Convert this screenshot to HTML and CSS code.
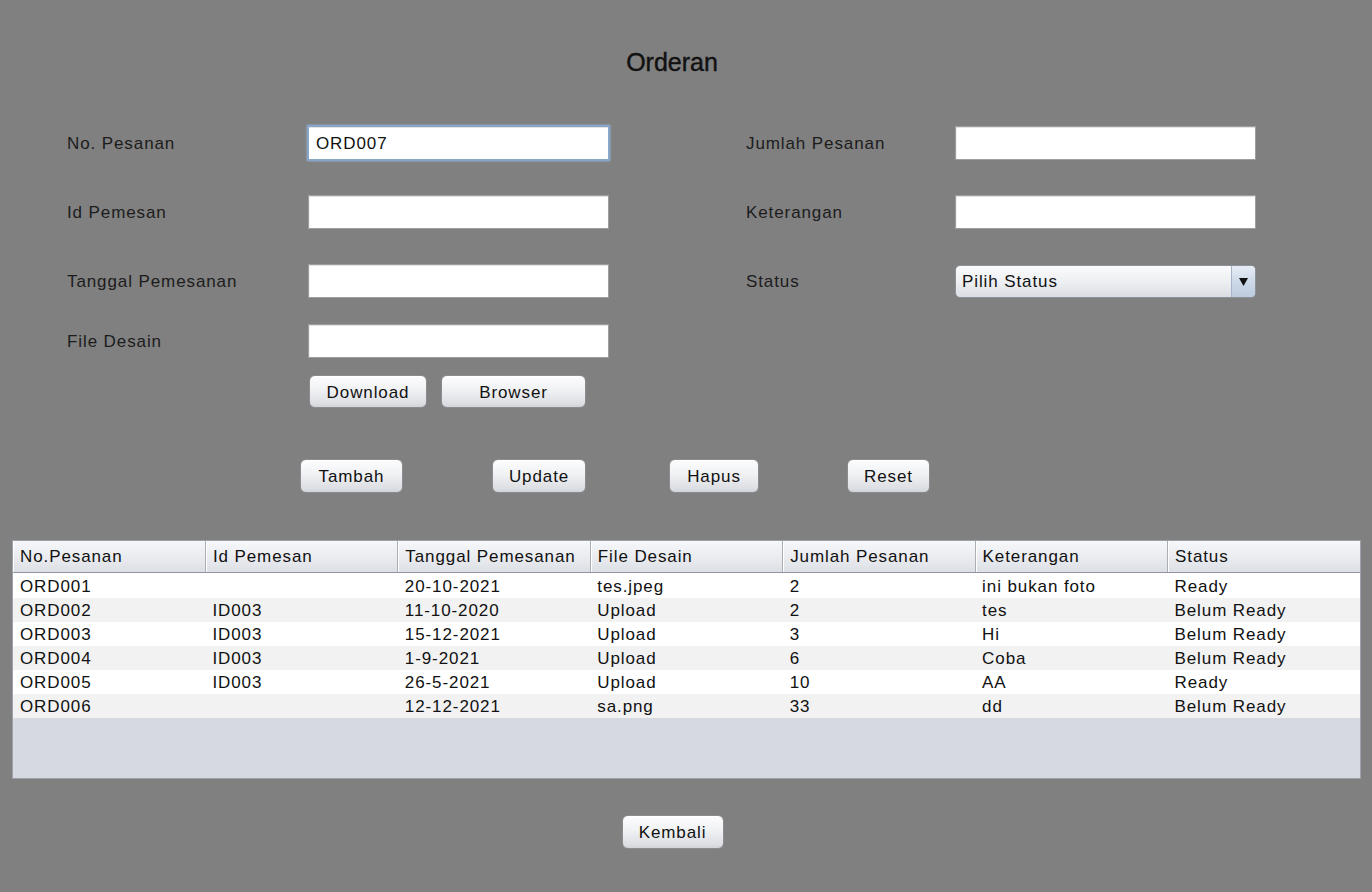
FILE: index.html
```html
<!DOCTYPE html>
<html lang="id">
<head>
<meta charset="utf-8">
<title>Orderan</title>
<link rel="stylesheet" href="styles.css">
</head>
<body>
<div class="frame">
  <h1 class="title">Orderan</h1>

  <div class="form">
    <label class="lbl">No. Pesanan</label>
    <div class="field focused">ORD007</div>
    <div class="spacer"></div>
    <label class="lbl">Jumlah Pesanan</label>
    <div class="field"></div>

    <label class="lbl">Id Pemesan</label>
    <div class="field"></div>
    <div class="spacer"></div>
    <label class="lbl">Keterangan</label>
    <div class="field"></div>

    <label class="lbl">Tanggal Pemesanan</label>
    <div class="field"></div>
    <div class="spacer"></div>
    <label class="lbl">Status</label>
    <div class="combo">
      <span class="combo-text">Pilih Status</span>
      <span class="combo-btn"><svg width="9" height="8" viewBox="0 0 9 8"><path d="M0 0H9L4.5 8Z" fill="#111"/></svg></span>
    </div>

    <label class="lbl">File Desain</label>
    <div class="field"></div>
  </div>

  <div class="file-buttons">
    <button class="btn w-download">Download</button>
    <button class="btn w-browser">Browser</button>
  </div>

  <div class="actions">
    <button class="btn w-tambah">Tambah</button>
    <button class="btn w-update">Update</button>
    <button class="btn w-hapus">Hapus</button>
    <button class="btn w-reset">Reset</button>
  </div>

  <div class="table-wrap">
    <table class="grid">
      <thead>
        <tr>
          <th>No.Pesanan</th><th>Id Pemesan</th><th>Tanggal Pemesanan</th><th>File Desain</th><th>Jumlah Pesanan</th><th>Keterangan</th><th>Status</th>
        </tr>
      </thead>
      <tbody>
        <tr><td>ORD001</td><td></td><td>20-10-2021</td><td>tes.jpeg</td><td>2</td><td>ini bukan foto</td><td>Ready</td></tr>
        <tr><td>ORD002</td><td>ID003</td><td>11-10-2020</td><td>Upload</td><td>2</td><td>tes</td><td>Belum Ready</td></tr>
        <tr><td>ORD003</td><td>ID003</td><td>15-12-2021</td><td>Upload</td><td>3</td><td>Hi</td><td>Belum Ready</td></tr>
        <tr><td>ORD004</td><td>ID003</td><td>1-9-2021</td><td>Upload</td><td>6</td><td>Coba</td><td>Belum Ready</td></tr>
        <tr><td>ORD005</td><td>ID003</td><td>26-5-2021</td><td>Upload</td><td>10</td><td>AA</td><td>Ready</td></tr>
        <tr><td>ORD006</td><td></td><td>12-12-2021</td><td>sa.png</td><td>33</td><td>dd</td><td>Belum Ready</td></tr>
      </tbody>
    </table>
  </div>

  <div class="bottom">
    <button class="btn w-kembali">Kembali</button>
  </div>
</div>
</body>
</html>
```

FILE: styles.css
```css
html, body {
  margin: 0;
  padding: 0;
  background: #808080;
}

body {
  width: 1372px;
  height: 892px;
  overflow: hidden;
  font-family: "Liberation Sans", Arial, sans-serif;
  font-size: 17px;
  letter-spacing: 0.9px;
  color: #1c1c1c;
}

.frame {
  display: flex;
  flex-direction: column;
}

.title {
  margin: 48px 0 0 0;
  padding-right: 28px;
  height: 28px;
  line-height: 28px;
  text-align: center;
  font-family: "Liberation Sans", Arial, sans-serif;
  font-weight: normal;
  font-size: 25px;
  letter-spacing: 0;
  color: #111;
  -webkit-text-stroke: 0.4px #111;
}

.form {
  margin-top: 50px;
  padding-left: 67px;
  display: grid;
  grid-template-columns: 241px 301px 137px 209px 301px;
  grid-template-rows: 69px 69px 60px 34px;
  align-items: start;
}

.lbl {
  height: 34px;
  line-height: 36px;
  color: #1c1c1c;
}

.field {
  box-sizing: border-box;
  height: 34px;
  background: #fff;
  border: 1px solid #9e9e9e;
  box-shadow: inset 0 1px 0 #e2e2e2, inset 1px 0 0 #f0f0f0;
  padding-left: 7px;
  line-height: 33px;
  color: #111;
}

.field.focused {
  border: 1px solid #8aa6c9;
  box-shadow: 0 0 0 1px #86a5cc, 0 0 2px 1px #9fb6d4, inset 0 1px 0 #e2e2e2;
}

.combo {
  box-sizing: border-box;
  height: 33px;
  margin-top: 1px;
  display: flex;
  border: 1px solid #8d9299;
  border-radius: 5px;
  background: linear-gradient(#fbfbfc, #eceef1 55%, #dadde2);
  overflow: hidden;
}

.combo-text {
  flex: 1;
  padding-left: 6px;
  line-height: 32px;
  color: #111;
}

.combo-btn {
  width: 23px;
  border-left: 1px solid #a5b4c8;
  background: linear-gradient(#e6edf6, #ccd8e7 55%, #bccbdd);
  display: flex;
  align-items: center;
  justify-content: center;
}

.btn {
  box-sizing: border-box;
  height: 34px;
  padding: 2px 0 0 0;
  font-family: "Liberation Sans", Arial, sans-serif;
  font-size: 17px;
  letter-spacing: 0.9px;
  color: #111;
  border: 1px solid #8a8c90;
  border-radius: 6px;
  background: linear-gradient(#fdfdfe, #f0f1f3 45%, #dcdee3 90%, #d0d3d8);
  box-shadow: inset 0 1px 0 #ffffff;
}

.file-buttons {
  margin-top: 17px;
  padding-left: 309px;
  display: flex;
  gap: 14px;
}

.file-buttons .btn { height: 33px; }

.w-download { width: 118px; }
.w-browser { width: 145px; }

.actions {
  margin-top: 51px;
  padding-left: 300px;
  display: flex;
}

.w-tambah { width: 103px; }
.w-update { width: 94px; margin-left: 89px; }
.w-hapus { width: 90px; margin-left: 83px; }
.w-reset { width: 83px; margin-left: 88px; }

.table-wrap {
  margin: 47px 0 0 12px;
  width: 1349px;
  height: 239px;
  box-sizing: border-box;
  border: 1px solid #9ca1aa;
  background: #d6d9e0;
}

.grid {
  width: 100%;
  table-layout: fixed;
  border-collapse: collapse;
  border-spacing: 0;
}

.grid th {
  height: 31px;
  padding: 0 0 0 7px;
  text-align: left;
  font-weight: normal;
  color: #111;
  background: linear-gradient(#f6f7f9, #e9ebef 55%, #dcdfe5);
  border-bottom: 1px solid #8f949d;
  border-right: 1px solid #a9aeb7;
  box-shadow: inset 1px 0 0 #ffffff;
  white-space: nowrap;
  overflow: hidden;
}

.grid th:last-child { border-right: none; }

.grid td {
  height: 22px;
  padding: 2px 0 0 7px;
  line-height: 22px;
  white-space: nowrap;
  overflow: hidden;
  color: #111;
}

.grid tbody tr:first-child td { padding-top: 3px; }

.grid tbody tr:nth-child(odd) td { background: #ffffff; }
.grid tbody tr:nth-child(even) td { background: #f2f2f2; }

.bottom {
  margin-top: 36px;
  padding-right: 27px;
  display: flex;
  justify-content: center;
}

.w-kembali { width: 102px; }
```
